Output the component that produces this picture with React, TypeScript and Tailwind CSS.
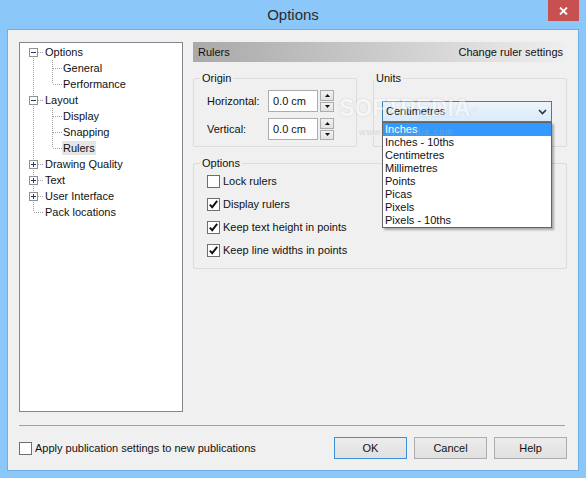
import { ReactNode } from 'react'

type Node = {
  label: string
  level: 0 | 1
  box?: 'minus' | 'plus'
  first?: boolean
  last?: boolean
  lastChild?: boolean
  selected?: boolean
}

const tree: Node[] = [
  { label: 'Options', level: 0, box: 'minus', first: true },
  { label: 'General', level: 1 },
  { label: 'Performance', level: 1, lastChild: true },
  { label: 'Layout', level: 0, box: 'minus' },
  { label: 'Display', level: 1 },
  { label: 'Snapping', level: 1 },
  { label: 'Rulers', level: 1, lastChild: true, selected: true },
  { label: 'Drawing Quality', level: 0, box: 'plus' },
  { label: 'Text', level: 0, box: 'plus' },
  { label: 'User Interface', level: 0, box: 'plus' },
  { label: 'Pack locations', level: 0, last: true },
]

const units = ['Inches', 'Inches - 10ths', 'Centimetres', 'Millimetres', 'Points', 'Picas', 'Pixels', 'Pixels - 10ths']

const dot = { stroke: '#a0a0a0', strokeWidth: 1, strokeDasharray: '1 1' }

function TreeRow({ n }: { n: Node }) {
  return (
    <div className="flex h-4 items-center">
      {n.level === 0 ? (
        <svg width="24" height="16" className="shrink-0">
          <line x1="13.5" y1={n.first ? 8 : 0} x2="13.5" y2={n.last ? 8 : 16} {...dot} />
          <line x1="14" y1="8.5" x2="24" y2="8.5" {...dot} />
          {n.box && (
            <g>
              <rect x="9.5" y="4.5" width="8" height="8" fill="#fdfdfd" stroke="#919191" />
              <line x1="11" y1="8.5" x2="16" y2="8.5" stroke="#27406b" />
              {n.box === 'plus' && <line x1="13.5" y1="6" x2="13.5" y2="11" stroke="#27406b" />}
            </g>
          )}
        </svg>
      ) : (
        <svg width="42" height="16" className="shrink-0">
          <line x1="13.5" y1="0" x2="13.5" y2="16" {...dot} />
          <line x1="32.5" y1="0" x2="32.5" y2={n.lastChild ? 8 : 16} {...dot} />
          <line x1="33" y1="8.5" x2="42" y2="8.5" {...dot} />
        </svg>
      )}
      <span className={`px-px leading-[14px] whitespace-nowrap ${n.selected ? 'bg-[#e5e5e5]' : ''}`}>
        {n.label}
      </span>
    </div>
  )
}

function Check({ checked }: { checked?: boolean }) {
  return (
    <span className="w-[13px] h-[13px] border border-[#6e6e6e] bg-white flex items-center justify-center shrink-0">
      {checked && (
        <svg width="11" height="11" viewBox="0 0 11 11">
          <path d="M1.8 5.6 L4.2 8.2 L9.2 1.8" fill="none" stroke="#111" strokeWidth="1.9" />
        </svg>
      )}
    </span>
  )
}

function Spinner() {
  return (
    <div className="ml-[2px] w-[14px] h-[22px] flex flex-col gap-px">
      {['up', 'down'].map((d) => (
        <div key={d} className="flex-1 border border-[#acacac] bg-gradient-to-b from-[#f2f2f2] to-[#e2e2e2] flex items-center justify-center">
          <svg width="5" height="3" viewBox="0 0 5 3">
            <path d={d === 'up' ? 'M0 3 L2.5 0 L5 3 Z' : 'M0 0 L2.5 3 L5 0 Z'} fill="#111" />
          </svg>
        </div>
      ))}
    </div>
  )
}

function Group({ title, className, legend, children }: { title: string; className: string; legend: string; children: ReactNode }) {
  return (
    <fieldset className={`border border-[#dcdcdc] rounded-[2px] ${className}`}>
      <legend className={`px-[2px] leading-[13px] ${legend}`}>{title}</legend>
      {children}
    </fieldset>
  )
}

function Button({ children, focused }: { children: ReactNode; focused?: boolean }) {
  return (
    <button
      className={`w-[73px] h-[22px] border bg-gradient-to-b from-[#ececec] to-[#e0e0e0] text-[11px] text-[#111] ${
        focused ? 'border-[#3c8fd9]' : 'border-[#adadad]'
      }`}
    >
      {children}
    </button>
  )
}

export default function App() {
  return (
    <div className="w-[586px] h-[478px] bg-[#8bc7f8] flex flex-col px-[7px] pb-[7px] font-['Liberation_Sans',Arial,sans-serif] text-[11px] text-[#111]">
      <div className="relative h-[29px] flex items-center justify-center shrink-0">
        <span className="text-[15px] text-[#2b2b2b] pt-px">Options</span>
        <div className="absolute right-0 top-0 w-[31px] h-[21px] bg-[#c75050] flex items-center justify-center">
          <svg width="9" height="8" viewBox="0 0 9 8">
            <path d="M1 0.5 L8 7.5 M8 0.5 L1 7.5" stroke="#fff" strokeWidth="1.8" />
          </svg>
        </div>
      </div>

      <div className="flex-1 border border-[#73aee3] bg-[#f0f0f0] flex flex-col px-[11px] pt-[12px]">
        <div className="flex gap-[10px]">
          <div className="w-[164px] h-[370px] border border-[#828790] bg-white pt-px">
            {tree.map((n) => (
              <TreeRow key={n.label} n={n} />
            ))}
          </div>

          <div className="relative w-[374px] flex flex-col">
            <div className="h-[20px] bg-gradient-to-r from-[#a9a9a9] to-[#efefef] flex items-center justify-between pl-[5px] pr-[4px]">
              <span>Rulers</span>
              <span>Change ruler settings</span>
            </div>

            {/* softpedia watermark, sits over everything */}
            <div className="pointer-events-none absolute z-20 left-[146px] top-[53px] flex flex-col items-start select-none opacity-40">
              <span className="text-[23px] leading-[26px] font-bold text-white [text-shadow:0_0_1px_#a8a8a8,0_0_2px_#bdbdbd]">
                SOFTPEDIA<sup className="text-[7px] font-normal">™</sup>
              </span>
              <span className="ml-[20px] mt-[5px] text-[9px] tracking-[1px] text-[#b4b4b4]">www.softpedia.com</span>
            </div>

            <div className="flex gap-[16px] mt-[10px]">
              <Group title="Origin" legend="ml-[6px]" className="w-[164px] h-[75px]">
                <div className="flex flex-col gap-[6px] pt-[5px] pl-[13px]">
                  {['Horizontal:', 'Vertical:'].map((l) => (
                    <div key={l} className="flex items-center">
                      <span className="w-[61px]">{l}</span>
                      <div className="w-[50px] h-[22px] border border-[#abadb3] bg-white flex items-center pl-[4px]">0.0 cm</div>
                      <Spinner />
                    </div>
                  ))}
                </div>
              </Group>

              <Group title="Units" legend="ml-0" className="w-[194px] h-[75px]">
                <div className="relative mt-[16px] ml-[8px] w-[170px] z-10">
                  <div className="h-[21px] border border-[#3c7fb1] bg-gradient-to-b from-[#edf5fd] to-[#d9ebfb] flex items-center justify-between pl-[3px] pr-[4px]">
                    <span>Centimetres</span>
                    <svg width="9" height="6" viewBox="0 0 9 6">
                      <path d="M1 1 L4.5 4.5 L8 1" fill="none" stroke="#333" strokeWidth="1.6" />
                    </svg>
                  </div>
                  <div className="absolute left-0 top-full w-[170px] border border-[#646464] bg-white shadow-[2px_2px_2px_rgba(0,0,0,0.3)]">
                    {units.map((u, i) => (
                      <div key={u} className={`h-[13px] leading-[13px] pl-[2px] ${i === 0 ? 'bg-[#3399ff] text-white' : ''}`}>
                        {u}
                      </div>
                    ))}
                  </div>
                </div>
              </Group>
            </div>

            <Group title="Options" legend="ml-[6px]" className="w-[374px] mt-[10px] pb-[6px]">
              {[
                ['Lock rulers', false],
                ['Display rulers', true],
                ['Keep text height in points', true],
                ['Keep line widths in points', true],
              ].map(([label, checked]) => (
                <div key={label as string} className="h-[23px] flex items-center gap-[3px] pl-[13px]">
                  <Check checked={checked as boolean} />
                  <span>{label as string}</span>
                </div>
              ))}
            </Group>
          </div>
        </div>

        <div className="mt-[13px] border-t border-[#a0a0a0] w-[546px]" />

        <div className="mt-[11px] flex items-center justify-between">
          <div className="flex items-center gap-[3px]">
            <Check />
            <span>Apply publication settings to new publications</span>
          </div>
          <div className="flex gap-[7px]">
            <Button focused>OK</Button>
            <Button>Cancel</Button>
            <Button>Help</Button>
          </div>
        </div>
      </div>
    </div>
  )
}
